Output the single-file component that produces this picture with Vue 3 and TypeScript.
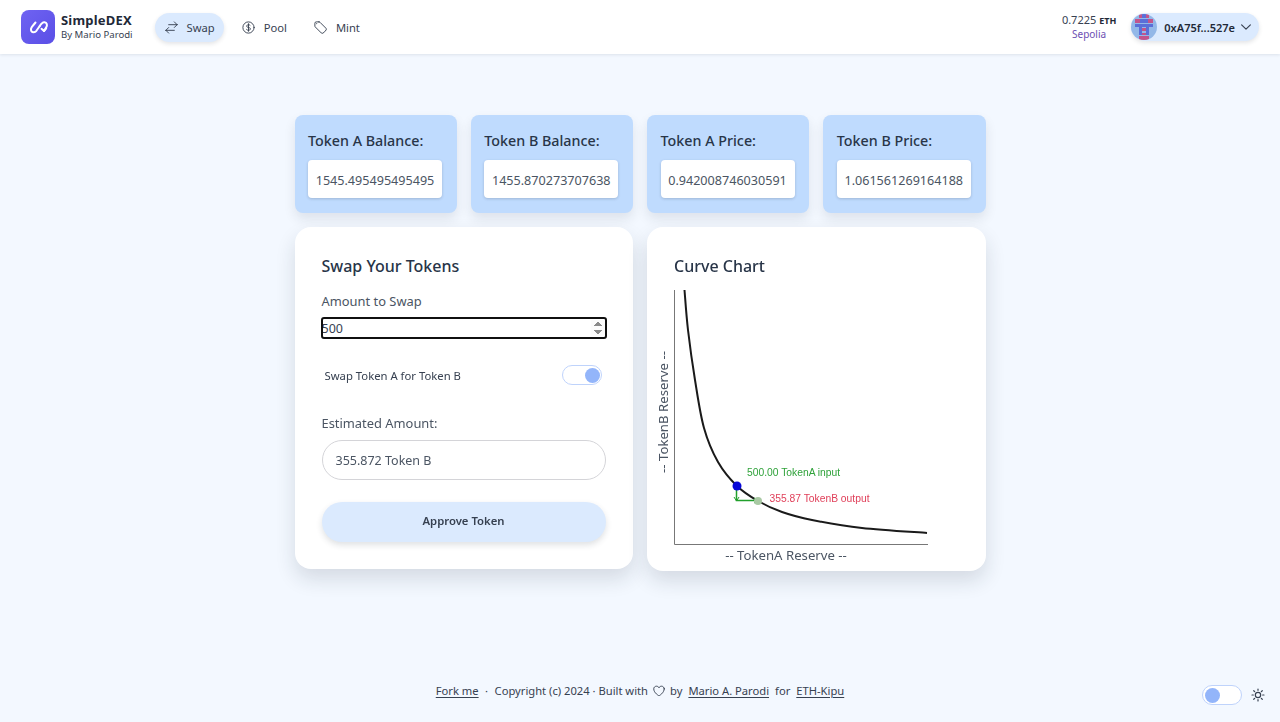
<template>
  <div class="page">
    <header class="navbar">
      <div class="brand">
        <div class="logo">
          <svg width="24" height="24" viewBox="0 0 24 24" fill="none" stroke="#fff" stroke-width="2" stroke-linecap="round" stroke-linejoin="round">
            <path d="M9.500 7.500 7 10.500c-2 2.200-2.600 4-1.600 5.600 1.200 1.700 3.600 1.400 5-.3l3.200-4.600" />
            <path d="M13.600 11.200c1.300-2.200 2.600-4.300 4.800-4 2.600.3 3.200 3 1.800 5.200L18 16" />
            <path d="M15.500 13.800 18 16l2.200-2.600" />
          </svg>
        </div>
        <div class="brand-text">
          <div class="brand-name">SimpleDEX</div>
          <div class="brand-sub">By Mario Parodi</div>
        </div>
      </div>
      <nav class="nav-links">
        <a v-for="link in links" :key="link.label" class="nav-link" :class="{ active: link.active }">
          <svg width="15" height="15" viewBox="0 0 24 24" fill="none" stroke="currentColor" stroke-width="1.5" stroke-linecap="round" stroke-linejoin="round">
            <path :d="link.icon" />
          </svg>
          {{ link.label }}
        </a>
      </nav>
      <div class="account">
        <div class="balance">
          <div class="eth">0.7225 <b>ETH</b></div>
          <div class="network">Sepolia</div>
        </div>
        <button class="wallet">
          <svg class="avatar" width="26" height="26" viewBox="0 0 26 26">
            <defs>
              <clipPath id="avatar-clip"><circle cx="13" cy="13" r="13" /></clipPath>
            </defs>
            <g clip-path="url(#avatar-clip)">
              <rect width="26" height="26" fill="#93b8e8" />
              <rect v-for="(r, i) in avatarCells" :key="i" :x="r[0]" :y="r[1]" :width="r[2]" :height="r[3]" :fill="r[4]" />
            </g>
          </svg>
          <span class="address">0xA75f...527e</span>
          <svg width="14" height="14" viewBox="0 0 24 24" fill="none" stroke="#374151" stroke-width="2" stroke-linecap="round" stroke-linejoin="round">
            <path d="m19.500 8.250-7.500 7.500-7.500-7.500" />
          </svg>
        </button>
      </div>
    </header>

    <main class="content">
      <section class="stats">
        <div v-for="stat in stats" :key="stat.label" class="stat-card">
          <h3>{{ stat.label }}</h3>
          <div class="stat-value">{{ stat.value }}</div>
        </div>
      </section>

      <section class="panels">
        <div class="panel">
          <h2>Swap Your Tokens</h2>
          <label class="field-label">Amount to Swap</label>
          <input ref="amountInput" class="amount-input" type="number" value="500" />
          <div class="direction">
            <span>Swap Token A for Token B</span>
            <span class="toggle on"><i></i></span>
          </div>
          <label class="field-label">Estimated Amount:</label>
          <div class="estimate">355.872 Token B</div>
          <button class="approve">Approve Token</button>
        </div>

        <div class="panel chart-panel">
          <h2>Curve Chart</h2>
          <svg class="chart" width="280" height="282" viewBox="655 285 280 282">
            <path d="M674.500 290V544.500H928" fill="none" stroke="#777" stroke-width="1" />
            <path :d="curvePath" fill="none" stroke="#1a1a1a" stroke-width="2" />
            <path d="M736.500 486V500.500H757" fill="none" stroke="#22a02c" stroke-width="1.500" />
            <path d="M734 497l2.500 4 2.500-4M754 498l4 2.500-4 2.500" fill="none" stroke="#22a02c" stroke-width="1" />
            <circle cx="758" cy="501" r="4" fill="#a9c9a4" />
            <circle cx="737" cy="486" r="4.500" fill="#0808d8" />
            <text x="747" y="475.500" class="note green">500.00 TokenA input</text>
            <text x="769.500" y="501.500" class="note red">355.87 TokenB output</text>
            <text x="786" y="560" class="axis" text-anchor="middle">-- TokenA Reserve --</text>
            <text x="668" y="412" class="axis" text-anchor="middle" transform="rotate(-90 668 412)">-- TokenB Reserve --</text>
          </svg>
        </div>
      </section>
    </main>

    <footer class="footer">
      <div></div>
      <div class="credits">
        <a>Fork me</a>
        <span class="sep">·</span>
        <span>Copyright (c) 2024 · Built with</span>
        <svg class="heart" width="14" height="14" viewBox="0 0 24 24" fill="none" stroke="currentColor" stroke-width="1.600" stroke-linecap="round" stroke-linejoin="round">
          <path d="M21 8.250c0-2.485-2.099-4.500-4.688-4.500-1.935 0-3.597 1.126-4.312 2.733-.715-1.607-2.377-2.733-4.313-2.733C5.100 3.750 3 5.765 3 8.250c0 7.220 9 12 9 12s9-4.780 9-12Z" />
        </svg>
        <span>by</span>
        <a class="gap-left">Mario A. Parodi</a>
        <span class="gap-left">for</span>
        <a class="gap-left">ETH-Kipu</a>
      </div>
      <div class="theme">
        <span class="toggle"><i></i></span>
        <svg width="16" height="16" viewBox="0 0 24 24" fill="none" stroke="#374151" stroke-width="1.800" stroke-linecap="round">
          <circle cx="12" cy="12" r="4" />
          <path d="M12 3v2M12 19v2M3 12h2M19 12h2M5.600 5.600 7 7M17 17l1.400 1.400M5.600 18.400 7 17M17 7l1.400-1.400" />
        </svg>
      </div>
    </footer>
  </div>
</template>

<script setup lang="ts">
import { onMounted, ref } from 'vue';

const links = [
  { label: 'Swap', active: true, icon: 'M7.5 21 3 16.5m0 0L7.5 12M3 16.5h13.5m0-13.5L21 7.5m0 0L16.5 12M21 7.5H7.5' },
  { label: 'Pool', active: false, icon: 'M12 6v12m-3-2.818.879.659c1.171.879 3.07.879 4.242 0 1.172-.879 1.172-2.303 0-3.182C13.536 12.219 12.768 12 12 12c-.725 0-1.45-.22-2.003-.659-1.106-.879-1.106-2.303 0-3.182s2.9-.879 4.006 0l.415.33M21 12a9 9 0 1 1-18 0 9 9 0 0 1 18 0Z' },
  { label: 'Mint', active: false, icon: 'M9.568 3H5.25A2.25 2.25 0 0 0 3 5.25v4.318c0 .597.237 1.17.659 1.591l9.581 9.581c.699.699 1.78.872 2.607.33a18.095 18.095 0 0 0 5.223-5.223c.542-.827.369-1.908-.33-2.607L11.16 3.66A2.25 2.25 0 0 0 9.568 3ZM6 6h.008v.008H6V6Z' },
];

const stats = [
  { label: 'Token A Balance:', value: '1545.495495495495' },
  { label: 'Token B Balance:', value: '1455.870273707638' },
  { label: 'Token A Price:', value: '0.942008746030591' },
  { label: 'Token B Price:', value: '1.061561269164188' },
];

const pink = '#c2558c';
const blue = '#5a6fd8';
const avatarCells: [number, number, number, number, string][] = [
  [8, 0, 3, 4, pink], [15, 0, 3, 4, pink], [11, 0, 4, 4, blue],
  [4, 5, 5, 4, pink], [17, 5, 5, 4, pink], [9, 5, 8, 4, blue],
  [4, 10, 18, 3, blue],
  [8, 13, 3, 8, blue], [15, 13, 3, 8, blue], [11, 14, 4, 3, pink], [11, 19, 4, 2, pink],
  [8, 22, 10, 4, pink],
];

const curve: [number, number][] = [
  [684.5, 290], [688, 330], [695, 380], [704, 428], [718, 462], [737, 486],
  [758, 501], [782, 512], [812, 520], [862, 528], [927, 533],
];

// catmull-rom through the sampled points
function smooth(pts: [number, number][]): string {
  let d = `M${pts[0][0]} ${pts[0][1]}`;
  for (let i = 0; i < pts.length - 1; i++) {
    const p0 = pts[Math.max(i - 1, 0)];
    const p1 = pts[i];
    const p2 = pts[i + 1];
    const p3 = pts[Math.min(i + 2, pts.length - 1)];
    const c1x = p1[0] + (p2[0] - p0[0]) / 6;
    const c1y = p1[1] + (p2[1] - p0[1]) / 6;
    const c2x = p2[0] - (p3[0] - p1[0]) / 6;
    const c2y = p2[1] - (p3[1] - p1[1]) / 6;
    d += `C${c1x} ${c1y} ${c2x} ${c2y} ${p2[0]} ${p2[1]}`;
  }
  return d;
}

const curvePath = smooth(curve);

const amountInput = ref<HTMLInputElement | null>(null);

onMounted(() => {
  amountInput.value?.focus();
});
</script>

<style>
html,
body {
  background: #f3f8ff;
}
</style>

<style scoped>
.page {
  min-height: 722px;
  display: flex;
  flex-direction: column;
  background: #f3f8ff;
  font-family: "Noto Sans", "Open Sans", sans-serif;
  color: #1f2937;
}

.navbar {
  height: 54px;
  box-sizing: border-box;
  background: #fff;
  box-shadow: 0 1px 3px rgba(31, 41, 55, 0.1);
  display: flex;
  align-items: center;
  padding: 0 21px;
}

.brand {
  display: flex;
  align-items: center;
  gap: 6px;
}

.logo {
  width: 34px;
  height: 34px;
  border-radius: 8px;
  background: linear-gradient(135deg, #6f63f2, #5a4fe6);
  display: flex;
  align-items: center;
  justify-content: center;
}

.brand-name {
  font-size: 13px;
  font-weight: 700;
  line-height: 15px;
  letter-spacing: 0.2px;
}

.brand-sub {
  font-size: 9.6px;
  line-height: 13px;
  color: #374151;
}

.nav-links {
  display: flex;
  align-items: center;
  margin-left: 22px;
  gap: 8px;
}

.nav-link {
  height: 29px;
  padding: 0 9px 0 9px;
  border-radius: 15px;
  display: flex;
  align-items: center;
  gap: 8px;
  font-size: 11.2px;
  color: #374151;
}

.nav-link.active {
  background: #dbeafe;
  box-shadow: 0 2px 4px rgba(31, 41, 55, 0.12);
}

.account {
  margin-left: auto;
  display: flex;
  align-items: center;
  gap: 15px;
}

.balance {
  text-align: center;
  font-size: 11px;
  line-height: 13.5px;
}

.eth {
  color: #374151;
}

.eth b {
  font-size: 9px;
  color: #1f2937;
}

.network {
  font-size: 10px;
  color: #6d4fb3;
}

.wallet {
  height: 28px;
  border: none;
  border-radius: 14px;
  background: #dbeafe;
  box-shadow: 0 2px 4px rgba(31, 41, 55, 0.12);
  padding: 0 6px 0 0;
  display: flex;
  align-items: center;
  gap: 4px;
  font-family: inherit;
  color: #1f2937;
}

.avatar {
  margin-right: 3px;
}

.address {
  font-size: 11px;
  font-weight: 600;
}

.content {
  flex: 1;
  width: 691px;
  margin: 0 auto;
  padding-top: 61px;
}

.stats {
  display: grid;
  grid-template-columns: repeat(4, 1fr);
  gap: 14px;
}

.stat-card {
  height: 98px;
  box-sizing: border-box;
  padding: 16px 13.5px 0;
  background: #bfdbfe;
  border-radius: 8px;
  box-shadow: 0 6px 12px rgba(31, 41, 55, 0.1);
}

.stat-card h3 {
  margin: 0 0 10px;
  font-size: 14.3px;
  line-height: 19px;
  font-weight: 500;
  color: #283548;
}

.stat-value {
  width: 134px;
  height: 38px;
  box-sizing: border-box;
  padding-top: 2px;
  background: #fff;
  border-radius: 4px;
  box-shadow: 0 1px 3px rgba(31, 41, 55, 0.2);
  display: flex;
  align-items: center;
  justify-content: center;
  font-size: 12.6px;
  color: #4b5563;
  white-space: nowrap;
}

.panels {
  display: grid;
  grid-template-columns: 1fr 1fr;
  gap: 14px;
  align-items: start;
  margin-top: 14px;
}

.panel {
  background: #fff;
  border-radius: 16px;
  box-shadow: 0 10px 20px rgba(31, 41, 55, 0.14);
  padding: 27px;
  height: 342px;
  box-sizing: border-box;
  display: flex;
  flex-direction: column;
}

.panel h2 {
  margin: 0 0 14px;
  font-size: 16px;
  line-height: 24px;
  font-weight: 500;
  color: #283548;
}

.field-label {
  font-size: 12.9px;
  line-height: 18px;
  color: #4b5563;
}

.amount-input {
  margin-top: 8px;
  width: 284px;
  height: 20px;
  box-sizing: border-box;
  padding: 0;
  border: none;
  border-radius: 2px;
  outline: 2px solid #101010;
  outline-offset: -1px;
  font-family: inherit;
  font-size: 12.5px;
  color: #374151;
  background: #fff;
}

.direction {
  margin: 27px 4px 29px 3px;
  height: 20px;
  display: flex;
  align-items: center;
  justify-content: space-between;
  font-size: 11.3px;
  color: #374151;
}

.toggle {
  width: 40px;
  height: 20px;
  box-sizing: border-box;
  border: 1.5px solid #bfd3fb;
  border-radius: 10px;
  background: #fff;
  display: flex;
  align-items: center;
  padding: 0 1.5px;
}

.toggle i {
  width: 15px;
  height: 15px;
  border-radius: 50%;
  background: #93b5fa;
}

.toggle.on {
  justify-content: flex-end;
}

.estimate {
  margin-top: 8px;
  width: 284px;
  height: 40px;
  box-sizing: border-box;
  border: 1px solid #d4d4d8;
  border-radius: 20px;
  padding-left: 13px;
  display: flex;
  align-items: center;
  font-size: 12.5px;
  color: #4b5563;
}

.approve {
  margin-top: 22px;
  width: 284px;
  height: 40px;
  border: none;
  border-radius: 20px;
  background: #dbeafe;
  box-shadow: 0 3px 6px rgba(31, 41, 55, 0.14);
  padding-bottom: 5px;
  font-family: inherit;
  font-size: 11.3px;
  font-weight: 600;
  color: #374151;
}

.chart-panel {
  height: 344px;
  padding-bottom: 0;
}

.chart-panel h2 {
  margin-bottom: 7px;
}

.chart {
  display: block;
  flex: none;
  margin-left: -19px;
  overflow: visible;
}

.note {
  font-family: "Liberation Sans", Arial, sans-serif;
  font-size: 10.3px;
}

.green {
  fill: #2fa23a;
}

.red {
  fill: #e0405a;
}

.axis {
  font-size: 13.2px;
  font-variant-ligatures: none;
  fill: #4b5563;
}

.footer {
  display: grid;
  grid-template-columns: 1fr auto 1fr;
  align-items: end;
  padding: 0 14px 17px;
}

.credits {
  display: flex;
  align-items: center;
  padding-bottom: 7px;
  font-size: 11.2px;
  color: #374151;
  gap: 3px;
}

.credits a {
  text-decoration: underline;
  text-underline-offset: 2px;
}

.sep {
  margin: 0 3.5px;
}

.heart {
  margin: 0 1px;
}

.gap-left {
  margin-left: 3px;
}

.theme {
  display: flex;
  align-items: center;
  justify-content: flex-end;
  gap: 8px;
}
</style>
